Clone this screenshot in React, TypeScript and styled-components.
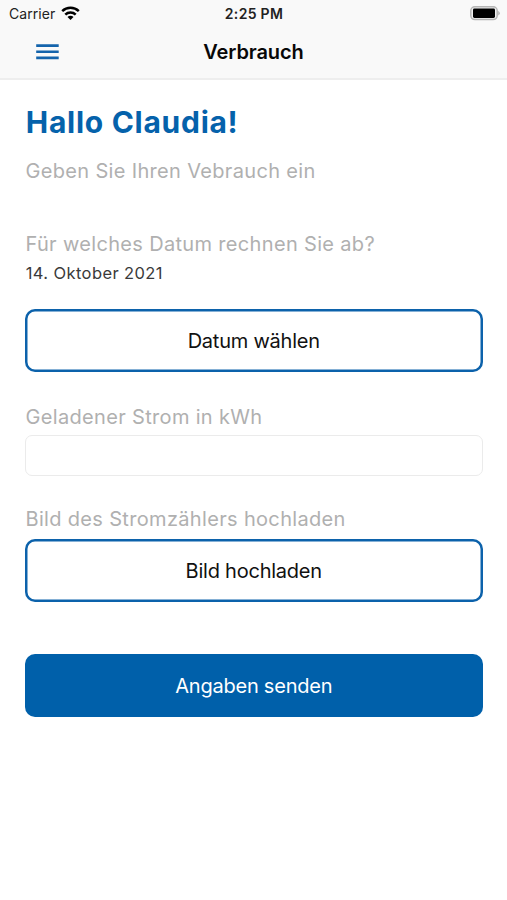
import React from "react";
import styled, { createGlobalStyle, css } from "styled-components";

const Global = createGlobalStyle`
  * { box-sizing: border-box; }
  body { margin: 0; background: #fff; font-family: Inter, "Liberation Sans", sans-serif; }
`;

const Screen = styled.div`
  width: 100%;
  height: 900px;
  background: #fff;
  overflow: hidden;
`;

const TopArea = styled.header`
  height: 80px;
  background: #f9f9f9;
  border-bottom: 2px solid #eee;
`;

const StatusBar = styled.div`
  height: 27px;
  display: grid;
  grid-template-columns: 1fr auto 1fr;
  align-items: center;
  padding: 0 7px 0 9px;
  color: #222;
`;

const Carrier = styled.div`
  display: flex;
  align-items: center;
  gap: 6px;
`;

const CarrierName = styled.span`
  font-size: 14px;
  letter-spacing: 0.05px;
  white-space: nowrap;
`;

const Clock = styled.time`
  margin-left: -1px;
  font-size: 14px;
  font-weight: 600;
  letter-spacing: 0.3px;
  white-space: nowrap;
`;

const BatterySlot = styled.div`
  display: flex;
  justify-content: flex-end;
`;

const NavBar = styled.nav`
  height: 50px;
  display: grid;
  grid-template-columns: 1fr auto 1fr;
  align-items: center;
  padding: 0 36px;
`;

const MenuButton = styled.button`
  display: flex;
  width: 24px;
  padding: 0;
  border: 0;
  background: none;
`;

const Title = styled.div`
  font-size: 20px;
  font-weight: 600;
  letter-spacing: -0.1px;
  color: #080808;
`;

const Form = styled.main`
  padding: 23px 24px 0 25px;
`;

const Heading = styled.h1`
  margin: 0;
  padding-left: 0.8px;
  height: 38px;
  line-height: 38px;
  font-size: 30px;
  font-weight: 700;
  letter-spacing: 0.72px;
  color: #0562ab;
`;

const Label = styled.label<{ $top: number }>`
  display: block;
  margin: ${(p) => p.$top}px 0 0;
  padding-left: 0.5px;
  height: 26px;
  line-height: 26px;
  font-size: 20px;
  letter-spacing: 0.33px;
  color: #b0b0b0;
  white-space: nowrap;
`;

const DateValue = styled.div`
  margin-top: 5px;
  padding-left: 0.7px;
  height: 22px;
  line-height: 22px;
  font-size: 16.5px;
  letter-spacing: 0.4px;
  color: #3a3a3a;
`;

const Button = styled.button<{ $primary?: boolean; $top: number }>`
  display: block;
  width: 457.5px;
  height: 63.5px;
  margin-top: ${(p) => p.$top}px;
  padding: 1.5px 0 0;
  border: 0;
  border-radius: 10px;
  background: #fff;
  box-shadow: inset 0 0 0 2.5px #0c62ab;
  color: #111;
  font: 400 20px Inter, "Liberation Sans", sans-serif;
  letter-spacing: -0.23px;
  ${(p) => p.$primary && css`background: #0060aa; box-shadow: none; color: #fff;`}
`;

const Input = styled.input`
  display: block;
  width: 458px;
  height: 41px;
  margin: 5px 0 0;
  border: 1px solid #ebebeb;
  border-radius: 7px;
  outline: none;
`;

export default function App() {
  return (
    <Screen>
      <Global />
      <TopArea>
        <StatusBar>
          <Carrier>
            <CarrierName>Carrier</CarrierName>
            <svg width="19" height="15" viewBox="0 0 19 15" fill="none" stroke="#000" strokeWidth="2.5">
              <path d="M1.2 5.1a12 12 0 0 1 16.6 0M4.3 8.7a7.4 7.4 0 0 1 10.4 0" />
              <path d="M9.5 13.9 6.5 11a4.2 4.2 0 0 1 6 0Z" fill="#000" stroke="none" />
            </svg>
          </Carrier>
          <Clock>2:25 PM</Clock>
          <BatterySlot>
            <svg width="30" height="15" viewBox="0 0 30 15">
              <rect x=".8" y=".8" width="26.4" height="12.8" rx="4" fill="#f0f0f0" stroke="#b5b5b5" strokeWidth="1.5" />
              <rect x="3" y="2.5" width="22" height="9.4" rx="1.4" />
              <path d="M28.3 4.8q2.8 2.4 0 4.8Z" fill="#aaa" />
            </svg>
          </BatterySlot>
        </StatusBar>
        <NavBar>
          <MenuButton aria-label="Menü">
            <svg width="24" height="18" viewBox="0 0 24 18" fill="#1464ac">
              <path d="M.2 1.3h22.5v2.6H.2zM.2 7.5h22.5v2.6H.2zM.2 13.6h22.5v2.6H.2z" />
            </svg>
          </MenuButton>
          <Title>Verbrauch</Title>
        </NavBar>
      </TopArea>
      <Form>
        <Heading>Hallo Claudia!</Heading>
        <Label as="p" $top={17}>Geben Sie Ihren Vebrauch ein</Label>
        <Label as="p" $top={47}>Für welches Datum rechnen Sie ab?</Label>
        <DateValue>14. Oktober 2021</DateValue>
        <Button type="button" $top={24.5}>Datum wählen</Button>
        <Label htmlFor="kwh" $top={32}>Geladener Strom in kWh</Label>
        <Input id="kwh" />
        <Label as="p" $top={30}>Bild des Stromzählers hochladen</Label>
        <Button type="button" $top={6.5}>Bild hochladen</Button>
        <Button type="submit" $primary $top={51.5}>Angaben senden</Button>
      </Form>
    </Screen>
  );
}
